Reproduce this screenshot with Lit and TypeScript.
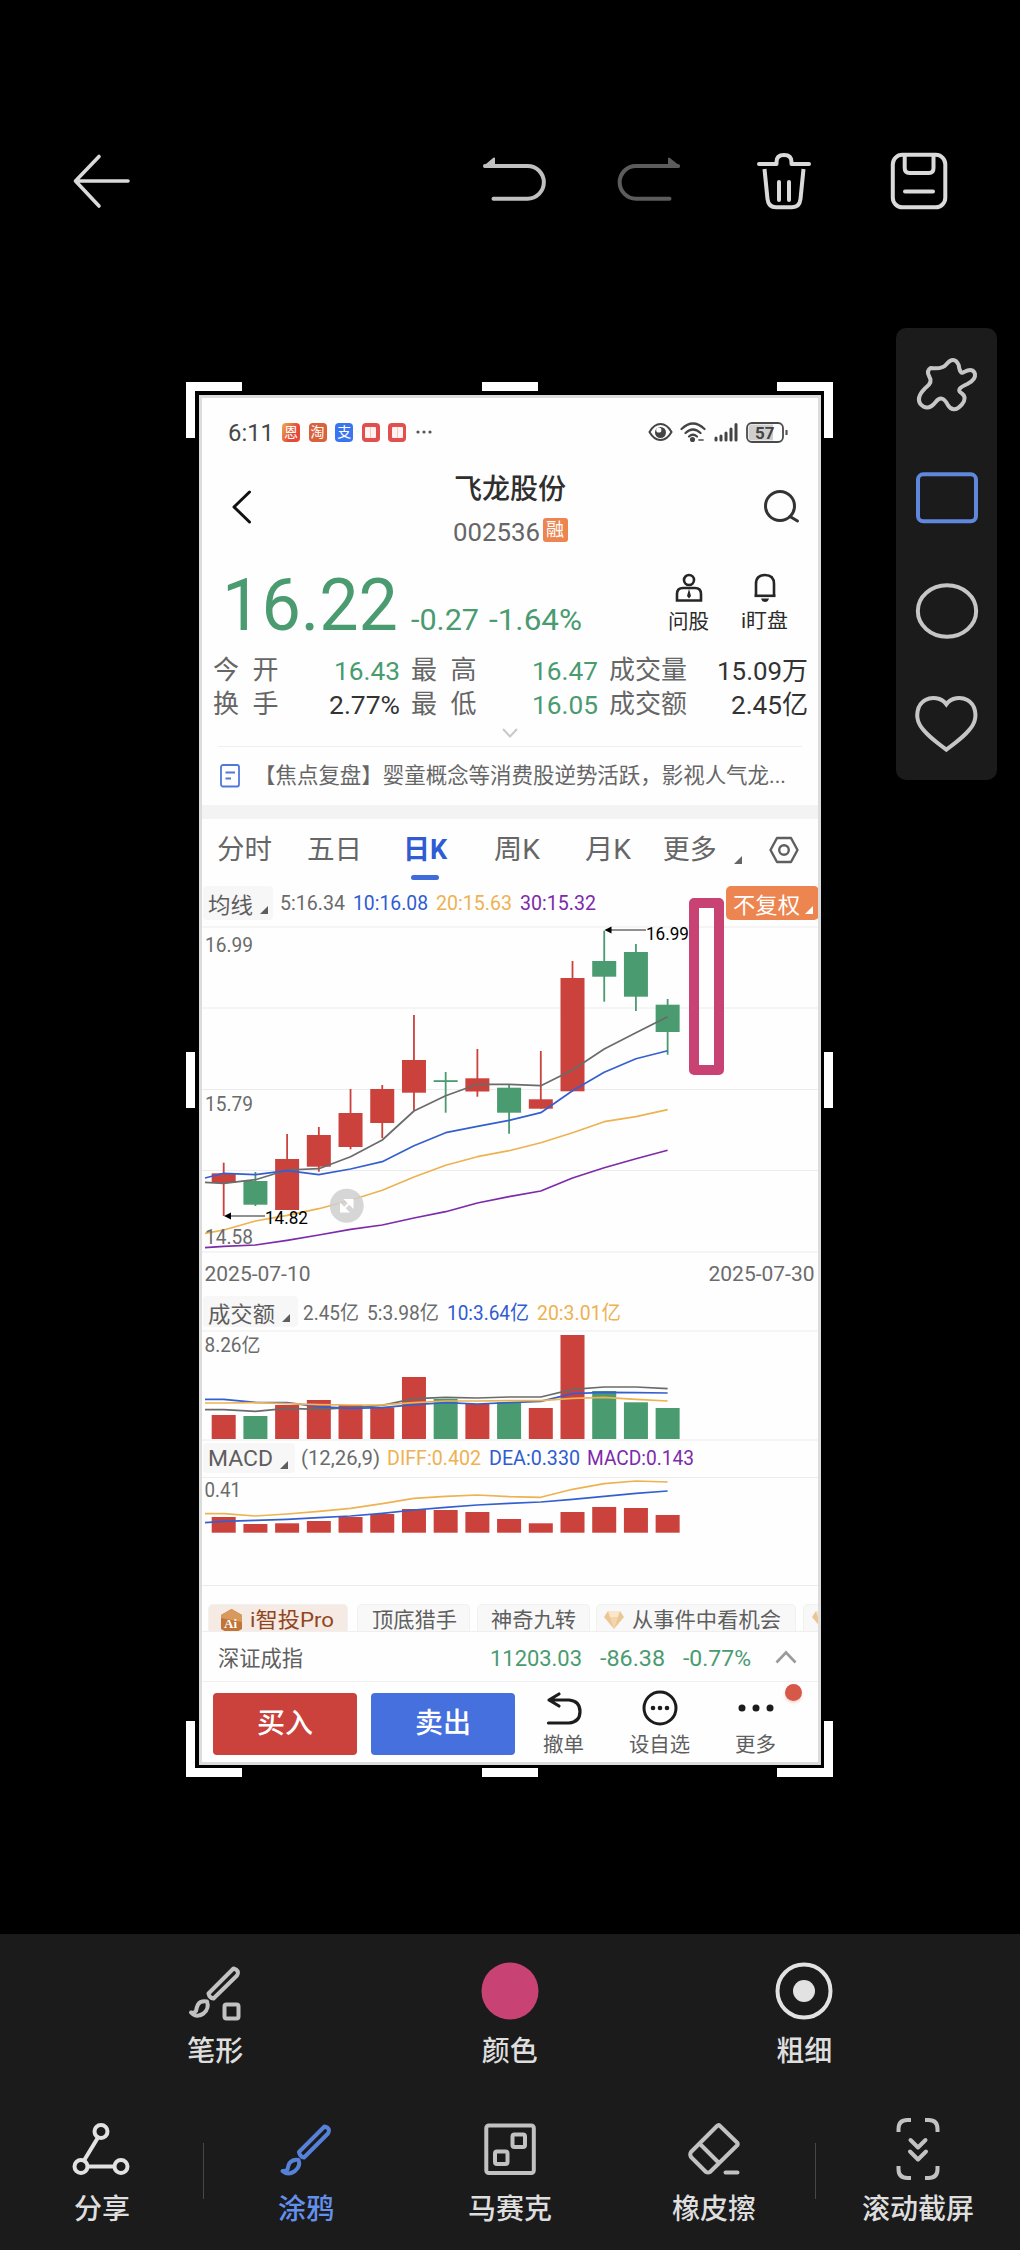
import { LitElement, html, svg, css } from "lit";
import { customElement, property } from "lit/decorators.js";

const FONT = css`Roboto, "Noto Sans CJK SC", sans-serif`;

/* A single line of text that is condensed or widened to a given advance width. */
@customElement("fit-text")
class FitText extends LitElement {
  @property({ type: Number }) w = 0;
  @property() text = "";
  static styles = css`
    :host { display: block; white-space: pre; flex: none; }
    .t { display: inline-block; transform-origin: 0 50%; }
  `;
  render() {
    return html`<span class="t">${this.text}</span>`;
  }
  fit() {
    const el = this.renderRoot.querySelector(".t") as HTMLElement;
    el.style.transform = "none";
    this.style.width = this.w + "px";
    if (el.offsetWidth) el.style.transform = `scaleX(${this.w / el.getBoundingClientRect().width})`;
  }
  updated() {
    this.fit();
    document.fonts.ready.then(() => this.fit());
  }
}

const fit = (text: string, w: number, cls = "") =>
  html`<fit-text class=${cls} .w=${w} .text=${text}></fit-text>`;

/* ---------- chart data ---------- */
const X0 = 223.7;
const STEP = 31.71;
const cx = (i: number) => X0 + i * STEP;
const RED = "#cb413c";
const GREEN = "#4a9b70";

// [rising, body top, body bottom, wick top, wick bottom]
const candles: [boolean, number, number, number, number][] = [
  [true, 1173.3, 1183, 1162.7, 1216],
  [false, 1181, 1204.7, 1172, 1206],
  [true, 1159, 1210, 1134, 1210],
  [true, 1135, 1166.7, 1127, 1171.7],
  [true, 1113, 1147, 1089, 1149.3],
  [true, 1089, 1123, 1085, 1138],
  [true, 1060, 1092.7, 1015, 1110.7],
  [false, 1080.2, 1082, 1072, 1112.7],
  [true, 1078.3, 1091.5, 1049, 1096.7],
  [false, 1087.7, 1112.7, 1084.3, 1133.7],
  [true, 1099.3, 1108.7, 1051, 1108.7],
  [true, 978, 1091.3, 961, 1091.3],
  [false, 961, 976.7, 930.7, 1001.7],
  [false, 952, 996.7, 944, 1011],
  [false, 1004.7, 1032, 999, 1054.7],
];
const averages = [
  { c: "#6b6b6b", v: [1182.3, 1183.3, 1179.7, 1170, 1168.7, 1156.7, 1140, 1111, 1095.7, 1084.3, 1084.3, 1085.7, 1070, 1049, 1032.7, 1016.7] },
  { c: "#3460cf", v: [1178, 1173.3, 1174.7, 1170.7, 1174.7, 1169, 1161.7, 1145.7, 1132.7, 1126.3, 1120.3, 1112.7, 1090.7, 1072.3, 1058.7, 1050.7] },
  { c: "#edb252", v: [1233.3, 1230, 1221, 1215.3, 1208.7, 1200.3, 1190.3, 1177, 1165.3, 1156.7, 1150.7, 1142.7, 1132.7, 1121.7, 1116.7, 1109.7] },
  { c: "#7d2aab", v: [1247.7, 1246.3, 1245, 1240.3, 1235, 1229.3, 1225, 1218, 1211.7, 1203, 1196.7, 1191, 1178, 1167.7, 1158.7, 1150.3] },
];
const volumeTops = [1415, 1416, 1405, 1400, 1405, 1407.3, 1377, 1399, 1404, 1402.3, 1408, 1335, 1391, 1402.3, 1408];
const volumeUp = [1, 0, 1, 1, 1, 1, 1, 0, 1, 0, 1, 1, 0, 0, 0];
const volumeLines = [
  { c: "#6b6b6b", v: [1409.7, 1409.7, 1411.3, 1408.3, 1409.3, 1407.7, 1405.3, 1398.7, 1397.3, 1398, 1397, 1397, 1389.3, 1387, 1387, 1388.7] },
  { c: "#3460cf", v: [1399.3, 1399.3, 1402.3, 1402.7, 1406.7, 1408.3, 1407.7, 1404.7, 1402.7, 1404, 1402.7, 1401.3, 1393.7, 1392.3, 1392.7, 1393] },
  { c: "#edb252", v: [1403, 1403, 1402.7, 1403.7, 1404.7, 1405, 1404.8, 1402.7, 1401, 1401, 1400.7, 1400.7, 1398.3, 1397.3, 1399.3, 1401] },
];
const macdTops = [1517, 1524, 1523.3, 1521, 1517, 1514, 1509, 1510, 1512, 1519, 1523.3, 1512, 1507, 1508, 1515];
const macdLines = [
  { c: "#edb252", v: [1513.7, 1513.7, 1516, 1514, 1511.3, 1508.3, 1503.7, 1498.3, 1496.3, 1495, 1496.7, 1497.3, 1489.3, 1483.7, 1481, 1482] },
  { c: "#3460cf", v: [1522.7, 1521.3, 1520.3, 1519.3, 1517.7, 1516, 1513.3, 1510, 1507.3, 1505, 1503.3, 1502, 1499.3, 1496.3, 1493.3, 1491] },
];

const curve = (l: { c: string; v: number[] }) => svg`<polyline fill="none" stroke=${l.c} stroke-width="1.7" stroke-linejoin="round"
  points=${l.v.map((y, i) => `${i === 0 ? 205 : cx(i - 1)},${y}`).join(" ")}></polyline>`;
const bar = (i: number, top: number, bottom: number, color: string) =>
  svg`<rect x=${cx(i) - 12} y=${top} width="24" height=${bottom - top} fill=${color}></rect>`;
const rule = (y: number) => svg`<line x1="202" x2="818" y1=${y} y2=${y} stroke="#ececec" stroke-width="1.2"></line>`;
const label = (x: number, base: number, w: number, s: string, size = 19.5, color = "#6b6b6b") =>
  svg`<text x=${x} y=${base} font-size=${size} fill=${color} textLength=${w} lengthAdjust="spacingAndGlyphs">${s}</text>`;

/* ---------- the stock page ---------- */
@customElement("stock-page")
class StockPage extends LitElement {
  static styles = css`
    :host { display: flex; flex-direction: column; width: 616px; height: 1364px; background: #fefefe; border: 3px solid #dcdcdc; overflow: hidden; color: #333; font-family: ${FONT}; }
    svg { display: block; flex: none; }
    svg text { font-family: ${FONT}; }
    .row { display: flex; align-items: center; flex: none; }
    .gray { color: #6b6b6b; } .green { color: #4a9b70; } .blue { color: #2f5cd2; } .gold { color: #edb252; } .violet { color: #7d2aab; }

    .status { height: 68px; padding-left: 26px; font-size: 24.5px; color: #484848; }
    .clock { margin-right: 8px; }
    .app { width: 18px; height: 19px; border-radius: 4px; margin-right: 8.6px; color: #fff; font-size: 14px; line-height: 19px; text-align: center; overflow: hidden; flex: none; }
    .app.a1 { background: linear-gradient(120deg, #ecae4d, #e5493a 60%); }
    .app.a2 { background: #d9623a; }
    .app.a3 { background: #3a74f0; }
    .app.a4 { background: #e0504f; padding-top: 4px; box-sizing: border-box; }
    .page { width: 11px; height: 11px; margin: 0 auto; background: linear-gradient(90deg, #fff2f0 5px, #f6c9c6 5px 6px, #fff2f0 6px); border-radius: 1px; }
    .more { margin-left: 1px; }
    .sys { margin-left: auto; margin-right: 30px; gap: 7px; display: flex; }

    .title { height: 96px; padding-bottom: 9px; box-sizing: border-box; }
    .title .back { margin-left: 29px; margin-top: -6px; }
    .title .mid { width: 200px; margin-left: 157px; display: flex; flex-direction: column; align-items: center; }
    .name { font-size: 28px; line-height: 36px; font-weight: 500; margin-top: 2px; color: #2f2f2f; }
    .code { display: flex; align-items: center; gap: 3px; margin-top: 5px; height: 36px; font-size: 26.5px; color: #666; }
    .rong { width: 25px; height: 24px; border-radius: 3px; background: #ed8550; color: #fff; font-size: 18px; line-height: 23px; text-align: center; margin-top: -2px; }
    .title .find { margin-left: 152px; margin-top: -6px; }

    .quote { height: 91px; align-items: flex-start; padding-left: 20px; }
    .last { font-size: 73px; line-height: 86px; font-weight: 400; }
    .chg { font-size: 29px; line-height: 36px; margin-top: 40px; margin-left: 13px; }
    .pct { margin-left: 10px; }
    .act { display: flex; flex-direction: column; align-items: center; font-size: 20px; line-height: 26px; color: #2b2b2b; margin-top: 11px; }
    .act svg { margin-bottom: 6px; }
    .act.ask { margin-left: 86px; } .act.watch { margin-left: 32px; }
    .act.watch svg { margin-bottom: 5px; }
    .stats { display: grid; grid-template-columns: 66px 121px 11px 66px 121px 11px 78px 121px; padding-left: 11px; height: 68px; grid-auto-rows: 34px; line-height: 35px; font-size: 26.5px; flex: none; }
    .stats .k { color: #666; font-size: 26px; word-spacing: 7px; }
    .stats .v { justify-self: end; }
    .fold { display: flex; justify-content: center; height: 26px; padding-top: 6px; box-sizing: border-box; margin: 0 16px; border-bottom: 1.5px solid #efefef; flex: none; }
    .news { height: 58px; padding-left: 17px; color: #666; font-size: 21.2px; }
    .news fit-text { margin-left: 13px; margin-top: -5px; }
    .band { height: 14px; background: #f3f3f3; flex: none; }

    .tabs { height: 63px; font-size: 27px; color: #666; align-items: flex-start; line-height: 62px; }
    .tab { display: flex; flex-direction: column; align-items: center; flex: none; }
    .t1 { margin-left: 14px; } .t2 { margin-left: 35px; } .t3 { margin-left: 42px; } .t4 { margin-left: 45.500px; } .t5 { margin-left: 45px; } .t6 { margin-left: 33px; }
    .t3 { color: #2f5cd2; font-weight: 700; }
    .t3::after { content: ""; width: 28px; height: 5px; border-radius: 3px; background: #3f6bdb; margin-top: -6px; }
    .tri { width: 0; height: 0; border-left: 8px solid transparent; border-bottom: 8px solid currentColor; flex: none; }
    .tabs .tri { margin: 37px 0 0 17px; }
    .tabs svg { margin: 16px 0 0 27px; }

    .ind { font-size: 20px; color: #6b6b6b; }
    .ind1 { height: 42px; } .ind2 { height: 33px; padding-bottom: 2px; } .ind3 { height: 34px; padding-bottom: 1px; }
    .pick { display: flex; align-items: center; background: #f7f7f7; border-radius: 4px; padding-left: 5px; color: #5e5e5e; font-size: 22px; box-sizing: border-box; margin-left: 1px; margin-right: 7px; flex: none; }
    .pick .tri { margin-left: 7px; margin-top: 13px; }
    .ind1 .pick { width: 70px; height: 34px; } .ind2 .pick { width: 95px; height: 31px; margin-right: 5px; } .ind3 .pick { width: 92px; height: 30px; margin-right: 5.500px; }
    .ind fit-text + fit-text { margin-left: 8px; }
    .ind3 fit-text + fit-text { margin-left: 7.500px; }
    .fq { display: flex; align-items: center; width: 93px; height: 34px; background: #ed8550; color: #fff; border-radius: 5px; margin-left: 130px; padding-left: 7px; box-sizing: border-box; font-size: 22px; flex: none; }
    .fq .tri { margin: 14px 0 0 5px; }

    .chips { height: 42px; padding: 14px 0 0 6px; box-sizing: border-box; align-items: flex-start; gap: 8px; overflow: hidden; border-bottom: 1px solid #efefef; font-size: 21px; color: #5f5f5f; }
    .chip { height: 28px; line-height: 22px; padding-top: 5px; background: #f8f8f8; border: 1px solid #f1f1f1; border-bottom: 0; border-radius: 5px 5px 0 0; box-sizing: border-box; display: flex; flex: none; }
    .chip fit-text { margin-top: -1px; }
    .c1 { width: 140px; background: #f5ebe4; color: #91461f; padding-left: 11px; }
    .c2 { width: 113px; padding-left: 14px; margin-left: 1px; } .c3 { width: 113px; padding-left: 13px; margin-left: -1px; } .c4 { width: 200px; padding-left: 7px; margin-left: -2px; } .c5 { width: 60px; padding-left: 8px; margin-left: -1px; }
    .c1 svg { margin: -1px 7px 0 0; } .c4 svg, .c5 svg { margin: 1px 8px 0 0; }

    .index { height: 50px; padding-left: 16px; box-sizing: border-box; border-bottom: 1.5px solid #efefef; font-size: 21.8px; color: #5f5f5f; }
    .index .green { margin-top: 3px; }
    .index .i1 { margin-left: 186.500px; } .index .i2 { margin-left: 18.500px; } .index .i3 { margin-left: 18px; } .index svg { margin-left: 24px; }
    .trade { height: 80px; padding-left: 11px; align-items: flex-start; color: #fff; font-size: 28px; position: relative; }
    .btn { width: 144px; height: 62px; line-height: 62px; margin-top: 11px; border-radius: 4px; text-align: center; font-weight: 500; margin-right: 14px; flex: none; }
    .buy { background: #cb413c; } .sell { background: #4570de; }
    .op { display: flex; flex-direction: column; align-items: center; font-size: 20px; line-height: 26px; color: #5f5f5f; margin-top: 8px; flex: none; }
    .op svg { margin-bottom: 6px; }
    .o1 { margin-left: 14px; } .o2 { margin-left: 45px; } .o3 { margin-left: 45px; }
    .dot { position: absolute; left: 583px; top: 2px; width: 17px; height: 17px; border-radius: 50%; background: #d65848; box-shadow: 0 2px 3px #d6584840; }
  `;

  gem() {
    return html`<svg width="20" height="18" viewBox="0 0 20 18"><path d="M4 0H16L20 6L10 18L0 6Z" fill="#ecc795"/><path d="M4 0H16L14 6H6Z" fill="#f9e6cb"/><path d="M6 6H14L10 18Z" fill="#f3d6ae"/></svg>`;
  }

  render() {
    return html`
      <div class="row status">
        ${fit("6:11", 46, "clock")}
        <div class="app a1">恩</div><div class="app a2">淘</div><div class="app a3">支</div>
        <div class="app a4"><div class="page"></div></div><div class="app a4"><div class="page"></div></div>
        <svg width="16" height="4" class="more"><circle cx="2" cy="2" r="1.6" fill="#555"/><circle cx="8" cy="2" r="1.6" fill="#555"/><circle cx="14" cy="2" r="1.6" fill="#555"/></svg>
        <div class="sys">
          <svg width="25" height="20" viewBox="0 0 25 20" fill="none" stroke="#444" stroke-width="2"><path d="M1.5 10Q6 2 12.5 2T23.5 10Q19 18 12.5 18T1.5 10Z"/><circle cx="12.5" cy="10.5" r="5.5" fill="#444" stroke="none"/><circle cx="10.8" cy="8" r="2.6" fill="#fff" stroke="none"/></svg>
          <svg width="26" height="20" viewBox="0 0 26 20" fill="none" stroke="#444" stroke-width="2.2" stroke-linecap="round"><path d="M1.5 7Q13-4 24.500 7M5.500 11Q13 4 20.500 11M9 14.500Q13 11 17 14.500"/><circle cx="12.500" cy="17.500" r="1.500" fill="#444"/><path d="M19 18h4" stroke-width="1.8" stroke="#777"/></svg>
          <svg width="26" height="20" viewBox="0 0 26 20" stroke="#444" stroke-width="3" stroke-linecap="round"><path d="M3 18v-2M8 18v-4M13 18v-7M18 18v-11M23 18v-15.500"/></svg>
          <svg width="42" height="21" viewBox="0 0 42 21"><rect x="1" y="1" width="36" height="19" rx="5" fill="#fefefe" stroke="#4a4a4a" stroke-width="1.8"/><path d="M6 2.500H27V18.500H6Q2.500 18.500 2.500 15V6Q2.500 2.500 6 2.500Z" fill="#cfcfcf"/><path d="M40.500 8v5" stroke="#555" stroke-width="2.200"/><text x="9" y="16.500" font-size="17" font-weight="700" fill="#444">57</text></svg>
        </div>
      </div>
      <div class="row title">
        <svg class="back" width="22" height="34" viewBox="0 0 22 34" fill="none" stroke="#111" stroke-width="3" stroke-linecap="round" stroke-linejoin="round"><path d="M18.500 2L3 17L18.500 32"/></svg>
        <div class="mid">
          <div class="name">飞龙股份</div>
          <div class="code">${fit("002536", 87)}<div class="rong">融</div></div>
        </div>
        <svg class="find" width="38" height="38" viewBox="0 0 38 38" fill="none" stroke="#333" stroke-width="3"><circle cx="18" cy="18" r="14.500"/><path d="M28 28.500L35.500 33" stroke-linecap="round"/></svg>
      </div>
      <div class="row quote green">
        ${fit("16.22", 176, "last")}${fit("-0.27", 68, "chg")}${fit("-1.64%", 93, "chg pct")}
        <div class="act ask"><svg width="28" height="30" viewBox="0 0 28 30" fill="none" stroke="#262626" stroke-width="2.600"><circle cx="14" cy="7" r="5"/><path d="M2 27.500V21Q2 15 8 15H20Q26 15 26 21V27.500Z"/><path d="M14 16l2 7-2 2.500-2-2.500z" fill="#262626" stroke="none"/></svg>${fit("问股", 41)}</div>
        <div class="act watch"><svg width="24" height="30" viewBox="0 0 24 30" fill="none" stroke="#262626" stroke-width="2.600"><path d="M3 22.500V11Q3 2 12 2T21 11V22.500" /><path d="M1.500 22.800H22.500"/><path d="M8 25.500h8q-1 3.500-4 3.500t-4-3.500z" fill="#262626" stroke="none"/></svg>${fit("i盯盘", 47)}</div>
      </div>
      <div class="stats">
        <div class="k">今 开</div>${fit("16.43", 66, "v green")}<i></i><div class="k">最 高</div>${fit("16.47", 66, "v green")}<i></i>${fit("成交量", 78, "k")}${fit("15.09万", 91, "v")}
        <div class="k">换 手</div>${fit("2.77%", 71, "v")}<i></i><div class="k">最 低</div>${fit("16.05", 66, "v green")}<i></i>${fit("成交额", 78, "k")}${fit("2.45亿", 77, "v")}
      </div>
      <div class="fold"><svg width="18" height="12" viewBox="0 0 18 12" fill="none" stroke="#c9c9c9" stroke-width="2"><path d="M2 2L9 9.500L16 2"/></svg></div>
      <div class="row news">
        <svg width="22" height="24" viewBox="0 0 22 24" fill="none" stroke="#4f77dc" stroke-width="1.800"><rect x="2" y="1" width="18" height="21.500" rx="2"/><path d="M6.500 8.500h9.500M6.500 14.500h5.500" stroke-width="2.200"/></svg>
        ${fit("【焦点复盘】婴童概念等消费股逆势活跃，影视人气龙...", 532)}
      </div>
      <div class="band"></div>
      <div class="row tabs">
        ${fit("分时", 55, "tab t1")}${fit("五日", 55, "tab t2")}<div class="tab t3">日K</div>${fit("周K", 46, "tab t4")}${fit("月K", 46, "tab t5")}${fit("更多", 54, "tab t6")}
        <i class="tri"></i>
        <svg width="30" height="30" viewBox="0 0 30 30" fill="none" stroke="#5f5f5f" stroke-width="2.400" stroke-linejoin="round"><path d="M8 3H22L28.500 15L22 27H8L1.500 15Z"/><circle cx="15" cy="15" r="4.800"/></svg>
      </div>
      <div class="row ind ind1">
        <div class="pick">${fit("均线", 45)}<i class="tri"></i></div>
        ${fit("5:16.34", 65)}${fit("10:16.08", 75, "blue")}${fit("20:15.63", 76, "gold")}${fit("30:15.32", 76, "violet")}
        <div class="fq">${fit("不复权", 67)}<i class="tri"></i></div>
      </div>
      <svg width="616" height="371" viewBox="202 924 616 371">
        ${[927, 1008, 1089.5, 1170.5, 1252].map(rule)}
        ${candles.map(([up, t, b, wt, wb], i) => svg`
          <line x1=${cx(i)} x2=${cx(i)} y1=${wt} y2=${wb} stroke=${up ? RED : GREEN} stroke-width="1.8"></line>
          ${bar(i, t, b, up ? RED : GREEN)}`)}
        ${averages.map(curve)}
        <path d="M226 1216H265M606 930H646" stroke="#222" stroke-width="1.2"/><path d="M224 1216l7-3.500v7zM604.500 930l7-3.500v7z" fill="#000"/>
        ${label(265, 1224.3, 43, "14.82", 18, "#000")}${label(646, 939.7, 43, "16.99", 18, "#000")}
        ${label(205, 952, 48, "16.99")}${label(205, 1111, 48, "15.79")}${label(205, 1243.700, 48, "14.58")}
        ${label(204.500, 1280.700, 106, "2025-07-10")}${label(708.500, 1280.700, 106, "2025-07-30")}
        <circle cx="346.700" cy="1205.700" r="17" fill="#cfcfcf" fill-opacity=".85"/><path d="M343.500 1199H353.500V1209zM340 1202.500V1212.500H350z" fill="#fff"/><path d="M340.500 1212L353 1199.500" stroke="#fff" stroke-width="2"/>
      </svg>
      <div class="row ind ind2">
        <div class="pick">${fit("成交额", 67)}<i class="tri"></i></div>
        ${fit("2.45亿", 56)}${fit("5:3.98亿", 72)}${fit("10:3.64亿", 82, "blue")}${fit("20:3.01亿", 84, "gold")}
      </div>
      <svg width="616" height="111" viewBox="202 1330 616 111">
        ${[1331, 1440].map(rule)}
        ${volumeTops.map((t, i) => bar(i, t, 1439, volumeUp[i] ? RED : GREEN))}
        ${volumeLines.map(curve)}
        ${label(204.500, 1351.500, 56, "8.26亿")}
      </svg>
      <div class="row ind ind3">
        <div class="pick">${fit("MACD", 65)}<i class="tri"></i></div>
        ${fit("(12,26,9)", 79)}${fit("DIFF:0.402", 94, "gold")}${fit("DEA:0.330", 91, "blue")}${fit("MACD:0.143", 107, "violet")}
      </div>
      <svg width="616" height="114" viewBox="202 1476 616 114">
        ${[1477.500, 1585.500].map(rule)}
        ${macdTops.map((t, i) => bar(i, t, 1532.700, RED))}
        ${macdLines.map(curve)}
        ${label(204.500, 1497, 36.500, "0.41")}
      </svg>
      <div class="row chips">
        <div class="chip c1"><svg width="23" height="26" viewBox="0 0 23 26"><path d="M11.500 0L22 6V20L11.500 26L1 20V6Z" fill="#c27538"/><path d="M11.500 0L22 6V13L1 9V6Z" fill="#d79a5c"/><text x="4" y="18.500" font-size="13" font-weight="700" fill="#fff" style="font-family:'Liberation Serif',serif">Ai</text></svg>${fit("i智投Pro", 84)}</div>
        <div class="chip c2">${fit("顶底猎手", 85)}</div>
        <div class="chip c3">${fit("神奇九转", 85)}</div>
        <div class="chip c4">${this.gem()}${fit("从事件中看机会", 149)}</div>
        <div class="chip c5">${this.gem()}</div>
      </div>
      <div class="row index">
        ${fit("深证成指", 85)}${fit("11203.03", 92, "green i1")}${fit("-86.38", 65, "green i2")}${fit("-0.77%", 68, "green i3")}
        <svg width="22" height="14" viewBox="0 0 22 14" fill="none" stroke="#9a9a9a" stroke-width="2.600"><path d="M1.500 12.500L11 2.500L20.500 12.500"/></svg>
      </div>
      <div class="row trade">
        <div class="btn buy">买入</div><div class="btn sell">卖出</div>
        <div class="op o1"><svg width="36" height="36" viewBox="0 0 36 36" fill="none" stroke="#1c1c1c" stroke-width="3.200" stroke-linecap="round" stroke-linejoin="round"><path d="M13 4L3 10L13 16M3 10H23Q34 11 34 21.500T23 33H2.500"/></svg>${fit("撤单", 41)}</div>
        <div class="op o2"><svg width="36" height="36" viewBox="0 0 36 36" fill="none" stroke="#1c1c1c" stroke-width="3"><circle cx="18" cy="18" r="16"/><g fill="#1c1c1c" stroke="none"><circle cx="11" cy="18" r="2.300"/><circle cx="18" cy="18" r="2.300"/><circle cx="25" cy="18" r="2.300"/></g></svg>${fit("设自选", 61)}</div>
        <div class="op o3"><svg width="36" height="36" viewBox="0 0 36 36" fill="#1c1c1c"><circle cx="4" cy="18" r="3.500"/><circle cx="18" cy="18" r="3.500"/><circle cx="32" cy="18" r="3.500"/></svg>${fit("更多", 41)}</div>
        <div class="dot"></div>
      </div>
    `;
  }
}

/* ---------- the editor around it ---------- */
const brush = svg`<path d="M18.500 -22.500L-7 3Q-6 8 -2 8.500L22 -15.500Q25 -21 18.500 -22.500Z"/><path d="M-7.500 11Q-13 10 -16.500 14Q-18 17 -18.500 20.500Q-20 22.500 -23.500 22Q-18 27 -11 22Q-5 17 -7.500 11Z"/>`;

@customElement("app-root")
class AppRoot extends LitElement {
  static styles = css`
    :host { display: flex; flex-direction: column; width: 1020px; height: 2250px; background: #000; font-family: ${FONT}; color: #dedede; position: relative; overflow: hidden; }
    svg { display: block; overflow: visible; fill: none; stroke-linecap: round; stroke-linejoin: round; }
    header { display: flex; align-items: center; height: 68px; padding: 147px 0 47px 68px; flex: none; stroke: #dadada; stroke-width: 4; }
    header .undo { margin-left: 344px; stroke: #c0c0c0; fill: #c0c0c0; }
    header .redo { margin-left: 67px; stroke: #5c5c5c; fill: #5c5c5c; }
    header .trash { margin-left: 67px; }
    header .save { margin-left: 67px; }
    .stage { flex: 1; padding: 133px 0 0 199px; position: relative; }
    .crop { width: 622px; position: relative; }
    .h { position: absolute; width: 56px; height: 9px; background: #fff; }
    .v { position: absolute; width: 9px; height: 56px; background: #fff; }
    .l { left: -13px; } .r { right: -12px; } .t { top: -13px; } .b { bottom: -12px; } .cxm { left: 283px; } .cym { top: 657px; }
    .mark { position: absolute; left: 490px; top: 503px; width: 15px; height: 157px; border: 10px solid #c94274; border-radius: 5px; }
    .shapes { position: absolute; left: 896px; top: 66px; width: 101px; height: 452px; border-radius: 10px; background: #1b1b1b; display: flex; flex-direction: column; stroke: #c6c6c6; stroke-width: 12; }
    .shapes .on { stroke: #5f88dd; }
    footer { height: 316px; background: #1b1b1b; flex: none; font-size: 28px; line-height: 40px; font-weight: 500; }
    .opts { display: grid; grid-template-columns: repeat(3, 294.500px); padding: 27px 0 0 68px; }
    .modes { display: grid; grid-template-columns: repeat(5, 204px); margin-top: 45px; }
    .item { display: flex; flex-direction: column; align-items: center; position: relative; stroke: #c2c2c2; stroke-width: 4; }
    .opts .item svg { margin-bottom: 11px; }
    .modes .item svg { margin-bottom: 9px; }
    .active { color: #6390ec; stroke: #5681d8; }
    .bright { stroke: #e2e2e2; }
    .sep::after { content: ""; position: absolute; right: 0; top: 26px; width: 1.500px; height: 56px; background: #474747; }
  `;
  item(name: string, cls: string, size: number, glyph: unknown) {
    return html`<div class="item ${cls}"><svg width=${size} height=${size} viewBox="${-size / 2} ${-size / 2} ${size} ${size}">${glyph}</svg><span>${name}</span></div>`;
  }
  render() {
    const handles = ["h l t", "v l t", "h r t", "v r t", "h cxm t", "h l b", "v l b", "h r b", "v r b", "h cxm b", "v l cym", "v r cym"];
    return html`
      <header>
        <svg width="68" height="68" viewBox="68 147 68 68"><path d="M128 181H77M99 156.500L75.500 181L99 206" stroke-width="3.600"/></svg>
        <svg class="undo" width="68" height="68" viewBox="480 147 68 68"><path d="M485 166H527.500a16.300 16.300 0 0 1 0 32.700H493.500" fill="none"/><path d="M484.500 166.500L494 158.500V166.500Z" stroke-width="2"/></svg>
        <svg class="redo" width="68" height="68" viewBox="615 147 68 68"><path d="M678 166H636a16.300 16.300 0 0 0 0 32.700H669.500" fill="none"/><path d="M679 166.500L669 158.500V166.500Z" stroke-width="2"/></svg>
        <svg class="trash" width="68" height="68" viewBox="750 147 68 68"><path d="M759 164H776.500V162Q776.500 155 784 155T791.500 162V164H809M779 182V200M789 182V200"/><path d="M764.500 169L767.500 199Q768.500 207.200 776 207.200H792Q799.500 207.200 800.500 199L803.500 169" stroke-linecap="butt"/></svg>
        <svg class="save" width="68" height="68" viewBox="885 147 68 68"><rect x="892.800" y="154.800" width="52.500" height="52.500" rx="9.500"/><path d="M904.700 155.500V168Q904.700 173 909.500 173H929Q933.500 173 933.500 168V155.500M905 191.500H933"/></svg>
      </header>
      <div class="stage">
        <div class="crop">
          <stock-page></stock-page>
          ${handles.map((c) => html`<div class=${c}></div>`)}
          <div class="mark"></div>
        </div>
        <div class="shapes">
          <svg width="101" height="113" viewBox="48 54 303 339"><path d="M152 174Q188 178 198 164Q222 135 236 165Q240 195 252 186Q280 172 285 192Q288 208 262 222Q224 238 245 250Q262 262 246 283Q220 312 203 284Q186 252 167 276Q143 306 121 282Q108 262 135 235Q160 218 148 200Q138 182 152 174Z"/></svg>
          <svg class="on" width="101" height="113" viewBox="48 393 303 339"><rect x="114" y="493" width="174" height="141" rx="16"/></svg>
          <svg width="101" height="113" viewBox="48 732 303 339"><ellipse cx="201" cy="903" rx="87.500" ry="77"/></svg>
          <svg width="101" height="113" viewBox="48 1071 303 339"><path d="M199 1183C184 1162 155 1160 136 1170C110 1184 106 1220 119 1244C132 1268 160 1290 199 1319C238 1290 266 1268 279 1244C292 1220 288 1184 262 1170C243 1160 214 1162 199 1183Z" stroke-linejoin="miter"/></svg>
        </div>
      </div>
      <footer>
        <div class="opts">
          ${this.item("笔形", "", 60, svg`<g transform="translate(-.5 .5)"><path d="M19 -23L-6 2Q-5 6.500 -1 7L22.500 -16Q25.500 -21 19 -23Z"/><path d="M-7.500 10Q-14 9 -16.500 13Q-18 16 -18.500 19.500Q-20 22 -23.500 21Q-18 27 -11 22Q-5 17 -7.500 10Z"/><rect x="10" y="13" width="14" height="14" rx="2"/></g>`)}
          ${this.item("颜色", "", 60, svg`<circle r="28.500" fill="#c94274" stroke="none"/>`)}
          ${this.item("粗细", "bright", 60, svg`<circle r="26.500"/><circle r="11" fill="#e2e2e2" stroke="none"/>`)}
        </div>
        <div class="modes">
          ${this.item("分享", "bright sep", 64, svg`<circle cx="-1" cy="-17.500" r="6.500"/><circle cx="-21" cy="17.500" r="6.500"/><circle cx="19" cy="17.500" r="6.500"/><path d="M-4 -11.500L-18 11.500M-14 17.500H12"/>`)}
          ${this.item("涂鸦", "active", 64, brush)}
          ${this.item("马赛克", "", 64, svg`<rect x="-23.700" y="-23.500" width="47.500" height="47.500" rx="2.500"/><rect x="2.500" y="-14.500" width="12.500" height="12.500" rx="2"/><rect x="-15" y="2.500" width="12.500" height="12.500" rx="2"/>`)}
          ${this.item("橡皮擦", "sep", 64, svg`<path d="M5.500 -23.500L23.500 -6Q24 -5 23.500 -4L-4 23Q-6 24 -8 23L-23 8Q-24.500 5.500 -23 3L3 -23Q4.500 -24.500 5.500 -23.500ZM-14 -5L4.500 13.500M11.500 23.500H23.500"/>`)}
          ${this.item("滚动截屏", "", 64, svg`<g stroke-linecap="butt"><path d="M-19.500 -17V-20Q-19.500 -29 -10.500 -29H-7M7 -29H10.500Q19.500 -29 19.500 -20V-17M-19.500 17V20Q-19.500 29 -10.500 29H-7M7 29H10.500Q19.500 29 19.500 20V17"/></g><path d="M-7.500 -9L0 -1.500L7.500 -9M-8 2.500L0 10.500L8 2.500"/>`)}
        </div>
      </footer>
    `;
  }
}
